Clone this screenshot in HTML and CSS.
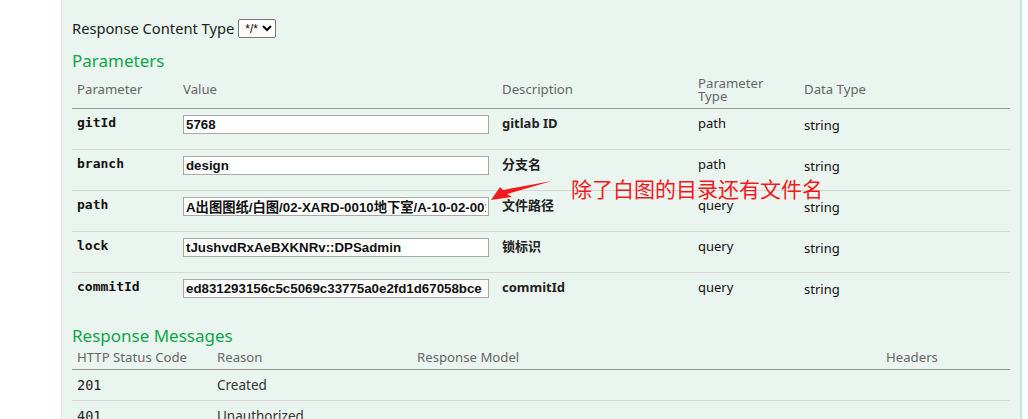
FILE: index.html
```html
<!DOCTYPE html>
<html lang="zh-CN">
<head>
<meta charset="utf-8">
<title>Swagger operation</title>
<link rel="stylesheet" href="styles.css">
</head>
<body>
<div class="panel">
  <div class="ctype">
    <label class="ctype-label" for="ct">Response Content Type</label>
    <select id="ct" class="ctype-select"><option>*/*</option></select>
  </div>

  <h4 class="section-title">Parameters</h4>
  <table class="params">
    <colgroup>
      <col class="c-name"><col class="c-value"><col class="c-desc"><col class="c-ptype"><col class="c-dtype">
    </colgroup>
    <thead>
      <tr>
        <th>Parameter</th>
        <th>Value</th>
        <th>Description</th>
        <th class="two-line">Parameter<br>Type</th>
        <th>Data Type</th>
      </tr>
    </thead>
    <tbody>
      <tr>
        <td class="code">gitId</td>
        <td><input class="field" type="text" value="5768"></td>
        <td class="desc">gitlab ID</td>
        <td class="ptype">path</td>
        <td class="dtype">string</td>
      </tr>
      <tr>
        <td class="code">branch</td>
        <td><input class="field" type="text" value="design"></td>
        <td class="desc">分支名</td>
        <td class="ptype">path</td>
        <td class="dtype">string</td>
      </tr>
      <tr>
        <td class="code">path</td>
        <td><input class="field" type="text" value="A出图图纸/白图/02-XARD-0010地下室/A-10-02-001.dwg"></td>
        <td class="desc">文件路径</td>
        <td class="ptype">query</td>
        <td class="dtype">string</td>
      </tr>
      <tr>
        <td class="code">lock</td>
        <td><input class="field" type="text" value="tJushvdRxAeBXKNRv::DPSadmin"></td>
        <td class="desc">锁标识</td>
        <td class="ptype">query</td>
        <td class="dtype">string</td>
      </tr>
      <tr class="last">
        <td class="code">commitId</td>
        <td><input class="field" type="text" value="ed831293156c5c5069c33775a0e2fd1d67058bce"></td>
        <td class="desc">commitId</td>
        <td class="ptype">query</td>
        <td class="dtype">string</td>
      </tr>
    </tbody>
  </table>

  <h4 class="section-title">Response Messages</h4>
  <table class="responses">
    <colgroup>
      <col class="r-code"><col class="r-reason"><col class="r-model"><col class="r-headers">
    </colgroup>
    <thead>
      <tr>
        <th>HTTP Status Code</th>
        <th>Reason</th>
        <th>Response Model</th>
        <th>Headers</th>
      </tr>
    </thead>
    <tbody>
      <tr>
        <td class="code plain">201</td>
        <td>Created</td>
        <td></td>
        <td></td>
      </tr>
      <tr>
        <td class="code plain">401</td>
        <td>Unauthorized</td>
        <td></td>
        <td></td>
      </tr>
    </tbody>
  </table>
</div>

<svg class="note-arrow" width="70" height="30" viewBox="0 0 70 30" aria-hidden="true">
  <polygon points="1,20 10,7 13,10 62,1 17,14 22,17" fill="#f5191c"/>
</svg>
<div class="note-text">除了白图的目录还有文件名</div>
</body>
</html>
```

FILE: styles.css
```css
html, body {
  margin: 0;
  padding: 0;
  background: #ffffff;
  height: 419px;
  overflow: hidden;
}

body {
  font-family: "Noto Sans", "Noto Sans CJK SC", sans-serif;
  color: #222;
  position: relative;
}

.panel {
  margin-left: 61px;
  width: 938px;
  padding: 19px 10px 0 10px;
  background: #ebf5f0;
  border-left: 1px solid #d6ebdf;
  border-right: 2px solid #c3e8d1;
  height: 420px;
  box-sizing: content-box;
}

.ctype {
  display: flex;
  align-items: center;
  height: 19px;
  gap: 4px;
}

.ctype-label {
  font-size: 14.7px;
  color: #222;
  line-height: 19px;
}

.ctype-select {
  width: 38px;
  height: 19px;
  font-size: 12px;
  font-family: "Liberation Sans", sans-serif;
  padding: 0 0 0 2px;
  border: 1px solid #767676;
  border-radius: 2px;
  background: #fff;
  color: #000;
}

.section-title {
  margin: 13px 0 0 0;
  font-size: 17px;
  line-height: 20px;
  font-weight: 400;
  color: #10a54a;
}

table {
  border-collapse: collapse;
  table-layout: fixed;
  width: 938px;
}

.c-name { width: 106px; }
.c-value { width: 319px; }
.c-desc { width: 196px; }
.c-ptype { width: 106px; }
.c-dtype { width: 211px; }

.r-code { width: 140px; }
.r-reason { width: 200px; }
.r-model { width: 469px; }
.r-headers { width: 129px; }

th {
  text-align: left;
  font-weight: 400;
  color: #666;
  font-size: 13.2px;
  line-height: 16px;
  padding: 0 0 0 5px;
  vertical-align: middle;
  border-bottom: 1px solid #999;
}

.params thead tr { height: 37px; }

th.two-line { line-height: 13px; padding-top: 1px; }

.params td {
  height: 34px;
  padding: 6px 0 0 5px;
  vertical-align: top;
  font-size: 13px;
  line-height: 16px;
  border-bottom: 1px solid #d4d9d6;
}

.params tr.last td { border-bottom: none; }

.code {
  font-family: "DejaVu Sans Mono", "Liberation Mono", monospace;
  font-weight: 700;
  font-size: 11.5px;
  color: #111;
}

.code.plain { font-weight: 400; color: #222; }

.field {
  display: block;
  box-sizing: border-box;
  width: 306px;
  height: 19px;
  margin: 0;
  padding: 0 2px;
  border: 1px solid #a9a9a9;
  background: #fff;
  font-family: "Liberation Sans", "Noto Sans CJK SC", sans-serif;
  font-weight: 700;
  font-size: 13.3px;
  color: #111;
  outline: none;
}

.desc {
  font-weight: 700;
  color: #222;
}

.ptype, .dtype { color: #111; }
.dtype { padding-top: 8px !important; height: 32px !important; }

.responses thead tr { height: 24px; }

.responses td {
  height: 30px;
  padding: 0 0 0 5px;
  vertical-align: middle;
  font-size: 13.5px;
  line-height: 16px;
  color: #333;
  border-bottom: 1px solid #d4d9d6;
}

.note-arrow {
  position: absolute;
  left: 490px;
  top: 180px;
}

.note-text {
  position: absolute;
  left: 571px;
  top: 178px;
  font-family: "Noto Sans CJK SC", sans-serif;
  font-size: 21px;
  line-height: 21px;
  color: #f5191c;
  white-space: nowrap;
}
```
